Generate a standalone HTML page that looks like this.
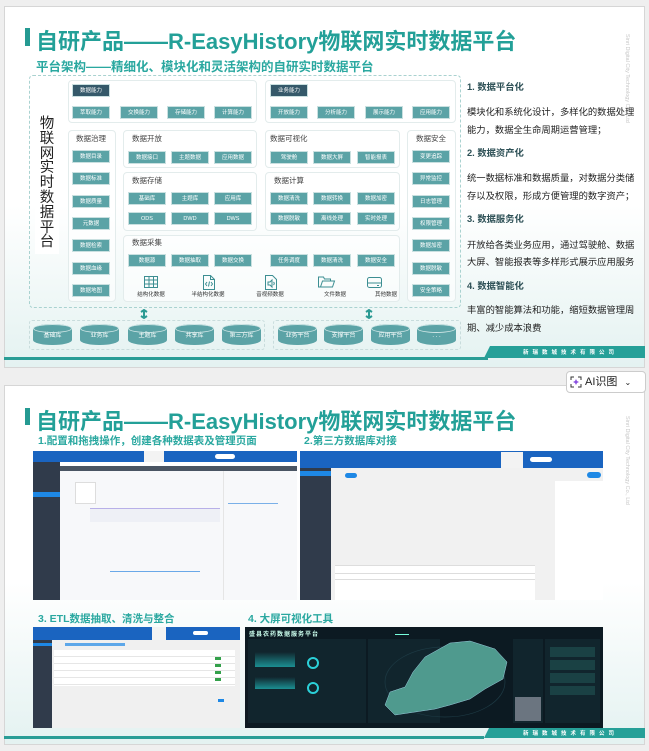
<!DOCTYPE html>
<html><head><meta charset="utf-8"><style>
*{margin:0;padding:0;box-sizing:border-box}
body{width:649px;height:751px;background:#efefef;position:relative;overflow:hidden;font-family:"Liberation Sans","Noto Sans CJK SC",sans-serif}
.a{position:absolute}
.slide{position:absolute;background:linear-gradient(#fff 0%,#fff 55%,#e4f2f1 100%);border:1px solid #d6d6d6}
.tbar{position:absolute;width:5px;background:#259a92}
.title{position:absolute;font-size:22px;font-weight:bold;color:#23a098;white-space:nowrap;letter-spacing:0px}
.sub{position:absolute;font-size:12.5px;font-weight:bold;color:#2aa8a0;white-space:nowrap}
.box{position:absolute;border:1px solid #e3ecec;border-radius:4px;background:rgba(255,255,255,.6)}
.lbl{position:absolute;font-size:7.5px;color:#444;white-space:nowrap}
.b{position:absolute;width:38px;height:13px;background:#5ba3a6;color:#fff;font-size:5.5px;text-align:center;line-height:13px;border:1px solid #c9e0e0;white-space:nowrap}
.dk{background:#35596a}
.ico{position:absolute;font-size:5.5px;color:#333;white-space:nowrap;text-align:center;width:50px}
.cyl{position:absolute;width:39px;height:21px;background:#5ba3a6;border-radius:19px/5px;color:#fff;font-size:6px;text-align:center;line-height:24px}
.cyl:before{content:"";position:absolute;left:0;top:0;width:39px;height:9px;border-radius:50%;border:1px solid #cfe6e6;box-sizing:border-box}
.rt{position:absolute;left:467px;font-size:9.3px;color:#222;white-space:nowrap}
.rh{font-weight:bold;color:#2c4f55}
.wm{position:absolute;writing-mode:vertical-rl;font-size:5.5px;color:#c8c8c8;white-space:nowrap}
.co{position:absolute;color:#fff;font-size:5.5px;font-weight:bold;letter-spacing:4px;white-space:nowrap}
</style></head><body>

<!-- SLIDE 1 -->
<div class="slide" style="left:4px;top:6px;width:641px;height:362px"></div>
<div class="tbar" style="left:25px;top:28px;height:18px"></div>
<div class="title" style="left:36px;top:24px">自研产品——R-EasyHistory物联网实时数据平台</div>
<div class="sub" style="left:36px;top:56px">平台架构——精细化、模块化和灵活架构的自研实时数据平台</div>
<div class="wm" style="left:624px;top:34px">Sinri Digital City Technology Co., Ltd</div>

<div class="a" style="left:29px;top:75px;width:432px;height:233px;border:1px dashed #a9d2d0;border-radius:4px"></div>
<div class="a" style="left:35px;top:114px;width:24px;height:140px;background:#fff;font-size:14.5px;line-height:14.8px;color:#222;text-align:center;padding-top:3px">物<br>联<br>网<br>实<br>时<br>数<br>据<br>平<br>台</div>

<div class="box" style="left:68px;top:80px;width:189px;height:43px"></div>
<div class="b dk" style="left:72px;top:84px">数据能力</div>
<div class="b" style="left:72px;top:106px">萃取能力</div>
<div class="b" style="left:120px;top:106px">交换能力</div>
<div class="b" style="left:167px;top:106px">存储能力</div>
<div class="b" style="left:214px;top:106px">计算能力</div>
<div class="box" style="left:265px;top:80px;width:191px;height:43px"></div>
<div class="b dk" style="left:270px;top:84px">业务能力</div>
<div class="b" style="left:270px;top:106px">开放能力</div>
<div class="b" style="left:317px;top:106px">分析能力</div>
<div class="b" style="left:365px;top:106px">展示能力</div>
<div class="b" style="left:412px;top:106px">应用能力</div>

<div class="box" style="left:68px;top:130px;width:48px;height:172px"></div>
<div class="lbl" style="left:76px;top:133px">数据治理</div>
<div class="b" style="left:72px;top:150px">数据目录</div>
<div class="b" style="left:72px;top:172px">数据标准</div>
<div class="b" style="left:72px;top:195px">数据质量</div>
<div class="b" style="left:72px;top:217px">元数据</div>
<div class="b" style="left:72px;top:239px">数据检索</div>
<div class="b" style="left:72px;top:262px">数据血缘</div>
<div class="b" style="left:72px;top:284px">数据地图</div>

<div class="box" style="left:123px;top:130px;width:134px;height:38px"></div>
<div class="lbl" style="left:132px;top:133px">数据开放</div>
<div class="b" style="left:128px;top:151px">数据接口</div>
<div class="b" style="left:171px;top:151px">主题数据</div>
<div class="b" style="left:214px;top:151px">应用数据</div>

<div class="box" style="left:123px;top:172px;width:134px;height:59px"></div>
<div class="lbl" style="left:132px;top:175px">数据存储</div>
<div class="b" style="left:128px;top:192px">基础库</div>
<div class="b" style="left:171px;top:192px">主题库</div>
<div class="b" style="left:214px;top:192px">应用库</div>
<div class="b" style="left:128px;top:212px">ODS</div>
<div class="b" style="left:171px;top:212px">DWD</div>
<div class="b" style="left:214px;top:212px">DWS</div>

<div class="box" style="left:265px;top:130px;width:135px;height:38px"></div>
<div class="lbl" style="left:270px;top:133px">数据可视化</div>
<div class="b" style="left:270px;top:151px">驾驶舱</div>
<div class="b" style="left:313px;top:151px">数据大屏</div>
<div class="b" style="left:357px;top:151px">智能报表</div>

<div class="box" style="left:265px;top:172px;width:135px;height:59px"></div>
<div class="lbl" style="left:274px;top:175px">数据计算</div>
<div class="b" style="left:270px;top:192px">数据清洗</div>
<div class="b" style="left:313px;top:192px">数据转换</div>
<div class="b" style="left:357px;top:192px">数据加密</div>
<div class="b" style="left:270px;top:212px">数据脱敏</div>
<div class="b" style="left:313px;top:212px">离线处理</div>
<div class="b" style="left:357px;top:212px">实时处理</div>

<div class="box" style="left:123px;top:235px;width:277px;height:67px"></div>
<div class="lbl" style="left:132px;top:237px">数据采集</div>
<div class="b" style="left:128px;top:254px">数据源</div>
<div class="b" style="left:171px;top:254px">数据抽取</div>
<div class="b" style="left:214px;top:254px">数据交换</div>
<div class="b" style="left:270px;top:254px">任务调度</div>
<div class="b" style="left:313px;top:254px">数据清洗</div>
<div class="b" style="left:357px;top:254px">数据安全</div>
<svg class="a" style="left:123px;top:274px" width="277" height="18" viewBox="0 0 277 18" fill="none" stroke="#3c8e92" stroke-width="1">
<rect x="21.5" y="2.5" width="13" height="11"/><path d="M21.5 6h13M21.5 10h13M26 2.5v11M30.5 2.5v11"/>
<path d="M80.5 1.5h7l4 4v10h-11z M87.5 1.5v4h4"/><path d="M84 8l-1.5 2 1.5 2M88 8l1.5 2-1.5 2M86.5 7.5l-1 5"/>
<path d="M142.5 1.5h7l4 4v10h-11z"/><path d="M145 8h2l2-2v7l-2-2h-2z M150.5 8c1 1 1 2 0 3"/>
<path d="M195.5 5v8h14l2-6h-12l-2 6 M195.5 5v-2h5l1 2h6v2"/>
<rect x="244.5" y="3.5" width="14" height="10" rx="2"/><path d="M244.5 9h14M254 11.5h2"/>
</svg>
<div class="ico" style="left:126px;top:290px">结构化数据</div>
<div class="ico" style="left:183px;top:290px">半结构化数据</div>
<div class="ico" style="left:245px;top:290px">音视频数据</div>
<div class="ico" style="left:310px;top:290px">文件数据</div>
<div class="ico" style="left:361px;top:290px">其他数据</div>

<div class="box" style="left:407px;top:130px;width:49px;height:172px"></div>
<div class="lbl" style="left:416px;top:133px">数据安全</div>
<div class="b" style="left:412px;top:150px">变更追踪</div>
<div class="b" style="left:412px;top:172px">异常监控</div>
<div class="b" style="left:412px;top:195px">日志管理</div>
<div class="b" style="left:412px;top:217px">权限管理</div>
<div class="b" style="left:412px;top:239px">数据加密</div>
<div class="b" style="left:412px;top:262px">数据脱敏</div>
<div class="b" style="left:412px;top:284px">安全策略</div>

<svg class="a" style="left:139px;top:309px" width="10" height="10"><path d="M5 1v8M2 3l3-2 3 2M2 7l3 2 3-2" stroke="#2b9a93" stroke-width="2" fill="none"/></svg>
<svg class="a" style="left:364px;top:309px" width="10" height="10"><path d="M5 1v8M2 3l3-2 3 2M2 7l3 2 3-2" stroke="#2b9a93" stroke-width="2" fill="none"/></svg>

<div class="a" style="left:29px;top:320px;width:236px;height:30px;border:1px dashed #c8dcdc;border-radius:3px"></div>
<div class="cyl" style="left:33px;top:324px">基础库</div>
<div class="cyl" style="left:80px;top:324px">业务库</div>
<div class="cyl" style="left:128px;top:324px">主题库</div>
<div class="cyl" style="left:175px;top:324px">共享库</div>
<div class="cyl" style="left:222px;top:324px">第三方库</div>
<div class="a" style="left:273px;top:320px;width:188px;height:30px;border:1px dashed #c8dcdc;border-radius:3px"></div>
<div class="cyl" style="left:278px;top:324px">业务平台</div>
<div class="cyl" style="left:324px;top:324px">支撑平台</div>
<div class="cyl" style="left:371px;top:324px">应用平台</div>
<div class="cyl" style="left:417px;top:324px">. . .</div>

<div class="rt rh" style="top:79px">1. 数据平台化</div>
<div class="rt" style="top:104px">模块化和系统化设计，多样化的数据处理</div>
<div class="rt" style="top:122px">能力，数据全生命周期运营管理；</div>
<div class="rt rh" style="top:145px">2. 数据资产化</div>
<div class="rt" style="top:170px">统一数据标准和数据质量，对数据分类储</div>
<div class="rt" style="top:188px">存以及权限，形成方便管理的数字资产；</div>
<div class="rt rh" style="top:211px">3. 数据服务化</div>
<div class="rt" style="top:237px">开放给各类业务应用，通过驾驶舱、数据</div>
<div class="rt" style="top:254px">大屏、智能报表等多样形式展示应用服务</div>
<div class="rt rh" style="top:278px">4. 数据智能化</div>
<div class="rt" style="top:302px">丰富的智能算法和功能，缩短数据管理周</div>
<div class="rt" style="top:320px">期、减少成本浪费</div>

<div class="a" style="left:4px;top:357px;width:484px;height:3px;background:#2a9d96"></div>
<svg class="a" style="left:484px;top:346px" width="161" height="12"><path d="M6 0H161V12H0z" fill="#26a098"/></svg>
<div class="co" style="left:523px;top:348px">新瑞数城技术有限公司</div>

<!-- SLIDE 2 -->
<div class="slide" style="left:4px;top:385px;width:641px;height:360px"></div>
<div class="tbar" style="left:25px;top:408px;height:17px"></div>
<div class="title" style="left:36px;top:404px">自研产品——R-EasyHistory物联网实时数据平台</div>
<div class="wm" style="left:624px;top:416px">Sinri Digital City Technology Co., Ltd</div>
<div class="sub" style="left:38px;top:433px;font-size:10.5px">1.配置和拖拽操作，创建各种数据表及管理页面</div>
<div class="sub" style="left:304px;top:433px;font-size:10.5px">2.第三方数据库对接</div>
<div class="sub" style="left:38px;top:611px;font-size:10.5px">3. ETL数据抽取、清洗与整合</div>
<div class="sub" style="left:248px;top:611px;font-size:10.5px">4. 大屏可视化工具</div>

<!-- AI button -->
<div class="a" style="left:566px;top:371px;width:80px;height:22px;background:#fff;border:1px solid #ccc;border-radius:4px;font-size:11px;color:#222;line-height:20px;padding-left:18px">AI识图 <span style="font-size:8px;margin-left:4px">⌄</span></div>
<svg class="a" style="left:570px;top:376px" width="12" height="12"><path d="M1 4V1h3M8 1h3v3M11 8v3H8M4 11H1V8" stroke="#333" fill="none"/><path d="M6 3l1 2 2 1-2 1-1 2-1-2-2-1 2-1z" fill="#8a4fe0"/></svg>

<!-- screenshot 1 -->
<div class="a" style="left:33px;top:451px;width:264px;height:149px;background:#fff;overflow:hidden">
 <div class="a" style="left:0;top:0;width:264px;height:11px;background:#1a64c0"></div>
 <div class="a" style="left:111px;top:0;width:20px;height:11px;background:#f3f3f3"></div>
 <div class="a" style="left:182px;top:3px;width:20px;height:5px;border-radius:3px;background:#fff"></div>
 <div class="a" style="left:0;top:11px;width:27px;height:138px;background:#303b4b"></div>
 <div class="a" style="left:0;top:41px;width:27px;height:5px;background:#1e88e5"></div>
 <div class="a" style="left:27px;top:15px;width:237px;height:5px;background:#4a5563"></div>
 <div class="a" style="left:27px;top:20px;width:237px;height:129px;background:#f7f8fa"></div>
 <div class="a" style="left:42px;top:31px;width:21px;height:22px;border:1px solid #ddd;background:#fff"></div>
 <div class="a" style="left:57px;top:57px;width:130px;height:1px;background:#b8b0e8"></div>
 <div class="a" style="left:57px;top:58px;width:130px;height:13px;background:#eef0f6"></div>
 <div class="a" style="left:77px;top:120px;width:90px;height:1px;background:#6aa8e8"></div>
 <div class="a" style="left:190px;top:20px;width:1px;height:129px;background:#e5e5e5"></div>
 <div class="a" style="left:195px;top:52px;width:50px;height:1px;background:#7ab0e8"></div>
</div>
<!-- screenshot 2 -->
<div class="a" style="left:300px;top:451px;width:303px;height:149px;background:#f1f1f1;overflow:hidden">
 <div class="a" style="left:0;top:0;width:303px;height:17px;background:#1a64c0"></div>
 <div class="a" style="left:201px;top:1px;width:22px;height:16px;background:#f3f3f3"></div>
 <div class="a" style="left:230px;top:6px;width:22px;height:5px;border-radius:3px;background:#fff"></div>
 <div class="a" style="left:0;top:17px;width:31px;height:132px;background:#303b4b"></div>
 <div class="a" style="left:0;top:20px;width:31px;height:5px;background:#1e88e5"></div>
 <div class="a" style="left:45px;top:22px;width:12px;height:5px;border-radius:3px;background:#1e88e5"></div>
 <div class="a" style="left:287px;top:21px;width:14px;height:6px;border-radius:3px;background:#1e88e5"></div>
 <div class="a" style="left:255px;top:30px;width:48px;height:119px;background:#fff"></div>
 <div class="a" style="left:35px;top:114px;width:200px;height:35px;background:#fff;border-top:1px solid #ddd"></div>
 <div class="a" style="left:35px;top:122px;width:200px;height:1px;background:#ddd"></div>
 <div class="a" style="left:35px;top:128px;width:200px;height:1px;background:#ddd"></div>
</div>
<!-- screenshot 3 -->
<div class="a" style="left:33px;top:627px;width:207px;height:101px;background:#f0f0f0;overflow:hidden">
 <div class="a" style="left:0;top:0;width:207px;height:13px;background:#1a64c0"></div>
 <div class="a" style="left:119px;top:0;width:14px;height:13px;background:#f3f3f3"></div>
 <div class="a" style="left:160px;top:4px;width:15px;height:4px;border-radius:2px;background:#fff"></div>
 <div class="a" style="left:0;top:13px;width:19px;height:88px;background:#303b4b"></div>
 <div class="a" style="left:0;top:16px;width:19px;height:3px;background:#1e88e5"></div>
 <div class="a" style="left:32px;top:16px;width:60px;height:3px;background:#1e88e5;opacity:.7"></div>
 <div class="a" style="left:21px;top:23px;width:181px;height:36px;background:#fff;background-image:repeating-linear-gradient(#fff 0 6px,#e6e6e6 6px 7px)"></div>
 <div class="a" style="left:182px;top:30px;width:6px;height:26px;background-image:repeating-linear-gradient(#33a04a 0 3px,transparent 3px 7px)"></div>
 <div class="a" style="left:185px;top:72px;width:6px;height:3px;background:#1e88e5"></div>
</div>
<!-- screenshot 4 -->
<div class="a" style="left:245px;top:627px;width:358px;height:101px;background:#0c1a22;overflow:hidden">
 <div class="a" style="left:4px;top:2px;font-size:6px;color:#cfe;font-weight:bold;letter-spacing:1px">盛县农药数据服务平台</div>
 <div class="a" style="left:150px;top:7px;width:14px;height:1px;background:#7fd"></div>
 <div class="a" style="left:3px;top:12px;width:118px;height:84px;background:#11252d"></div>
 <div class="a" style="left:123px;top:12px;width:72px;height:84px;background:#11252d"></div>
 <div class="a" style="left:268px;top:12px;width:30px;height:84px;background:#11252d"></div>
 <div class="a" style="left:300px;top:12px;width:55px;height:84px;background:#11252d"></div>
 <div class="a" style="left:10px;top:25px;width:40px;height:15px;background:linear-gradient(transparent,#1b8f92)"></div>
 <div class="a" style="left:10px;top:50px;width:40px;height:12px;background:linear-gradient(transparent,#1b8f92)"></div>
 <div class="a" style="left:62px;top:30px;width:12px;height:12px;border:2px solid #2bd0d8;border-radius:50%"></div>
 <div class="a" style="left:62px;top:55px;width:12px;height:12px;border:2px solid #2bd0d8;border-radius:50%"></div>
 <div class="a" style="left:305px;top:20px;width:45px;height:48px;background-image:repeating-linear-gradient(#1a4144 0 10px,transparent 10px 13px)"></div>
 <div class="a" style="left:270px;top:70px;width:26px;height:24px;background:#6b7580"></div>
 <svg class="a" style="left:0;top:0" width="358" height="101"><ellipse cx="200" cy="55" rx="60" ry="35" fill="none" stroke="#1d3a44" stroke-width=".7"/><path d="M180 30L205 16 225 14 250 22 262 35 258 52 240 62 225 72 205 78 190 82 170 85 150 88 140 78 145 65 160 60 168 45z" fill="#4f9a8e" stroke="#9cd" stroke-width=".5"/></svg>
</div>

<div class="a" style="left:4px;top:736px;width:480px;height:3px;background:#2a9d96"></div>
<svg class="a" style="left:484px;top:728px" width="161" height="10"><path d="M5 0H161V10H0z" fill="#26a098"/></svg>
<div class="co" style="left:523px;top:729px">新瑞数城技术有限公司</div>
</body></html>
